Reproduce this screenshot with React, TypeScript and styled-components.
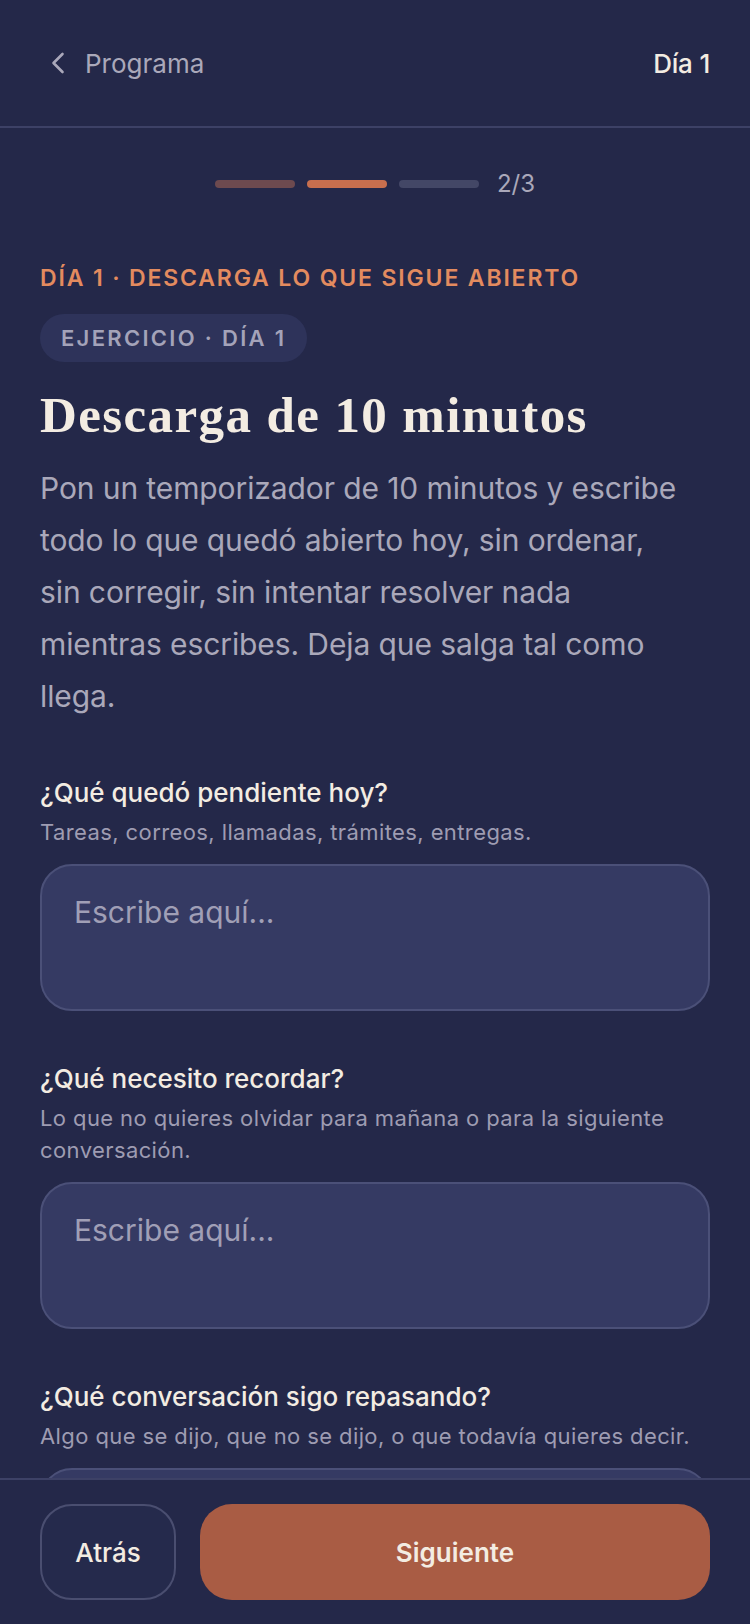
import React, { FC } from 'react';
import styled, { createGlobalStyle } from 'styled-components';

const Colors = {
    bg: '#242849',
    line: '#3d4166',
    cream: '#f3ece2',
    muted: '#aaa8ba',
    hint: '#9e9cb2',
    accent: '#e38b5f',
    field: '#353a63',
    fieldBorder: '#4b5078',
    chip: '#2e335a',
    button: '#a95c44',
};

const GlobalStyle = createGlobalStyle`
html, body {
    margin: 0;
    padding: 0;
    background: ${Colors.bg};
}
body {
    font-family: Inter, "Noto Sans", "DejaVu Sans", sans-serif;
    color: ${Colors.cream};
}
* { box-sizing: border-box; }
`;

const Page = styled.div`
height: 100vh;
display: flex;
flex-direction: column;
background: ${Colors.bg};
overflow: hidden;
`;

const TopBar = styled.header`
height: 128px;
flex-shrink: 0;
display: flex;
align-items: center;
justify-content: space-between;
padding: 0 40px 0 40px;
border-bottom: 2px solid ${Colors.line};
`;

const BackLink = styled.div`
display: flex;
align-items: center;
gap: 20px;
padding-left: 11px;
font-size: 26px;
color: ${Colors.muted};
`;

const DayTag = styled.div`
font-size: 26px;
font-weight: 500;
letter-spacing: -0.2px;
`;

const Content = styled.main`
flex: 1;
overflow: hidden;
padding: 40px 40px 0;
`;

const Progress = styled.div`
height: 32px;
display: flex;
align-items: center;
justify-content: center;
gap: 12px;
`;

const Step = styled.div<{ $state: 'done' | 'current' | 'todo' }>`
width: 80px;
height: 8px;
border-radius: 4px;
background: ${p => p.$state === 'done' ? '#6d4a4f' : p.$state === 'current' ? '#c86f4e' : '#434766'};
`;

const StepCount = styled.span`
margin-left: 6px;
font-size: 24px;
line-height: 32px;
color: ${Colors.muted};
`;

const Eyebrow = styled.div`
margin-top: 62px;
font-size: 23px;
line-height: 32px;
font-weight: 600;
letter-spacing: 1.85px;
color: ${Colors.accent};
`;

const Chip = styled.div`
margin-top: 20px;
display: inline-flex;
align-items: center;
height: 48px;
padding: 0 21px;
border-radius: 24px;
background: ${Colors.chip};
font-size: 22px;
font-weight: 600;
letter-spacing: 2.3px;
color: #a4a3b9;
`;

const Title = styled.h1`
margin: 25px 0 0;
font-family: "Liberation Serif", "DejaVu Serif", serif;
font-size: 51px;
line-height: 56px;
font-weight: 700;
letter-spacing: 1.4px;
color: ${Colors.cream};
`;

const Intro = styled.p`
margin: 19px 0 53px;
font-size: 30px;
line-height: 52px;
letter-spacing: -0.1px;
color: ${Colors.muted};
`;

const Question = styled.section`
& + & {
    margin-top: 50px;
}
`;

const QuestionLabel = styled.div`
font-size: 26px;
line-height: 36px;
font-weight: 500;
color: ${Colors.cream};
`;

const QuestionHint = styled.div`
margin-top: 5px;
font-size: 22px;
line-height: 32px;
letter-spacing: 0.4px;
color: ${Colors.hint};
`;

const Answer = styled.textarea`
display: block;
margin-top: 16px;
width: 100%;
height: 147px;
padding: 24px 32px;
border-radius: 32px;
border: 2px solid ${Colors.fieldBorder};
background: ${Colors.field};
font-family: inherit;
font-size: 30px;
line-height: 45px;
color: ${Colors.cream};
resize: none;
outline: none;
&::placeholder {
    color: #a09fb6;
}
`;

const BottomBar = styled.footer`
flex-shrink: 0;
display: flex;
gap: 24px;
padding: 24px 40px;
border-top: 2px solid ${Colors.line};
background: ${Colors.bg};
`;

const Button = styled.button<{ $primary?: boolean }>`
height: 96px;
border-radius: 32px;
font-family: inherit;
font-size: 26px;
font-weight: ${p => p.$primary ? 600 : 500};
color: ${Colors.cream};
cursor: pointer;
${p => p.$primary ? `
    flex: 1;
    border: none;
    background: ${Colors.button};
` : `
    width: 136px;
    border: 2px solid #4a4e70;
    background: #252a4c;
`}
`;

const ChevronLeft: FC = () => (
    <svg width="14" height="22" viewBox="0 0 14 22" fill="none">
        <path d="M11.5 2 L2.5 11 L11.5 20" stroke={Colors.muted} strokeWidth="2.6" strokeLinecap="round" strokeLinejoin="round" />
    </svg>
);

// the intro keeps the same line breaks as the design
const introLines = [
    'Pon un temporizador de 10 minutos y escribe',
    'todo lo que quedó abierto hoy, sin ordenar,',
    'sin corregir, sin intentar resolver nada',
    'mientras escribes. Deja que salga tal como',
    'llega.',
];

const questions = [
    { label: '¿Qué quedó pendiente hoy?', hint: 'Tareas, correos, llamadas, trámites, entregas.' },
    { label: '¿Qué necesito recordar?', hint: 'Lo que no quieres olvidar para mañana o para la siguiente conversación.' },
    { label: '¿Qué conversación sigo repasando?', hint: 'Algo que se dijo, que no se dijo, o que todavía quieres decir.' },
];

const App: FC = () => {
    return (
        <>
            <GlobalStyle />
            <Page>
                <TopBar>
                    <BackLink><ChevronLeft />Programa</BackLink>
                    <DayTag>Día 1</DayTag>
                </TopBar>
                <Content>
                    <Progress>
                        <Step $state="done" />
                        <Step $state="current" />
                        <Step $state="todo" />
                        <StepCount>2/3</StepCount>
                    </Progress>
                    <Eyebrow>DÍA 1 · DESCARGA LO QUE SIGUE ABIERTO</Eyebrow>
                    <Chip>EJERCICIO · DÍA 1</Chip>
                    <Title>Descarga de 10 minutos</Title>
                    <Intro>
                        {introLines.map((line, i) => (
                            <React.Fragment key={i}>
                                {line}
                                {i < introLines.length - 1 && <br />}
                            </React.Fragment>
                        ))}
                    </Intro>
                    {questions.map(q => (
                        <Question key={q.label}>
                            <QuestionLabel>{q.label}</QuestionLabel>
                            <QuestionHint>{q.hint}</QuestionHint>
                            <Answer placeholder="Escribe aquí..." />
                        </Question>
                    ))}
                </Content>
                <BottomBar>
                    <Button>Atrás</Button>
                    <Button $primary>Siguiente</Button>
                </BottomBar>
            </Page>
        </>
    );
};

export default App;
